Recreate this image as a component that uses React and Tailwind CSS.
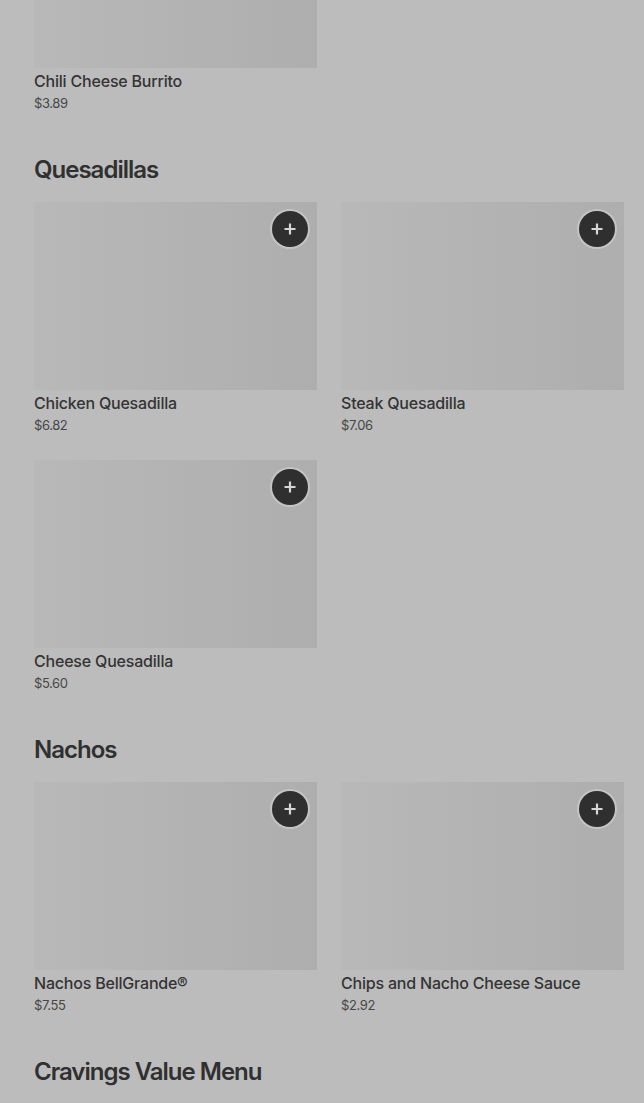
import React from "react";

const sections = [
  {
    title: null,
    items: [{ name: "Chili Cheese Burrito", price: "$3.89", noButton: true }],
  },
  {
    title: "Quesadillas",
    items: [
      { name: "Chicken Quesadilla", price: "$6.82" },
      { name: "Steak Quesadilla", price: "$7.06" },
      { name: "Cheese Quesadilla", price: "$5.60" },
    ],
  },
  {
    title: "Nachos",
    items: [
      { name: "Nachos BellGrande®", price: "$7.55" },
      { name: "Chips and Nacho Cheese Sauce", price: "$2.92" },
    ],
  },
  {
    title: "Cravings Value Menu",
    items: [
      { name: "", price: "" },
      { name: "", price: "" },
    ],
  },
];

function PlusButton() {
  return (
    <button className="absolute top-[9px] right-[9px] flex h-9 w-9 items-center justify-center rounded-full bg-[#2f2f2f] ring-2 ring-[#c4c4c4]">
      <svg width="14" height="14" viewBox="0 0 14 14" fill="none">
        <path d="M7 1.5v11M1.5 7h11" stroke="#d6d6d6" strokeWidth="2.2" />
      </svg>
    </button>
  );
}

function ItemCard({ item }) {
  return (
    <div className="flex flex-col">
      <div className="relative h-[188px] w-full bg-linear-to-r from-[#b8b8b8] to-[#aeaeae]">
        {!item.noButton && <PlusButton />}
      </div>
      <div className="mt-px text-base leading-6 font-medium tracking-[-0.2px] text-[#343434]">
        {item.name}
      </div>
      <div className="text-[13px] leading-[21px] tracking-[-0.4px] text-[#474747]">
        {item.price}
      </div>
    </div>
  );
}

export default function App() {
  return (
    <div
      className="h-[1103px] w-full overflow-hidden bg-[#bcbcbc] pl-[34px]"
      style={{ fontFamily: "Inter, 'Liberation Sans', sans-serif" }}
    >
      <div className="-mt-[120px]">
        {sections.map((section, i) => (
          <div key={i} className={section.title ? "pt-10" : ""}>
            {section.title && (
              <h2 className="mb-4 text-2xl leading-8 font-semibold tracking-[-1px] text-[#303030]">
                {section.title}
              </h2>
            )}
            <div className="grid grid-cols-[283px_283px] gap-x-6 gap-y-6">
              {section.items.map((item, j) => (
                <ItemCard key={j} item={item} />
              ))}
            </div>
          </div>
        ))}
      </div>
    </div>
  );
}
